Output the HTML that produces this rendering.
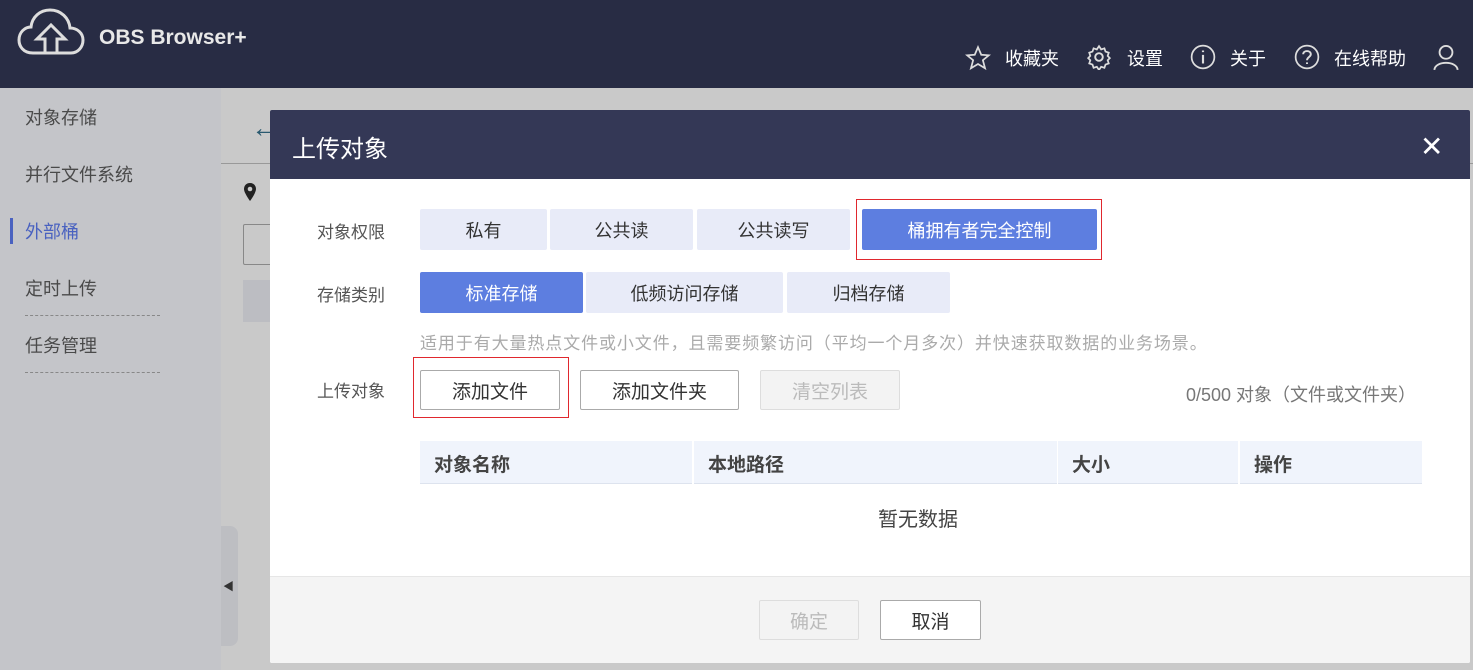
<!DOCTYPE html>
<html><head><meta charset="utf-8"><style>
*{box-sizing:border-box;margin:0;padding:0}
body{width:1473px;height:670px;overflow:hidden;position:relative;font-family:"Liberation Sans","Noto Sans CJK SC",sans-serif;background:#c5c6c9}
.abs{position:absolute}
.top{left:0;top:0;width:1473px;height:88px;background:#282c44;color:#fff}
.side{left:0;top:88px;width:221px;height:582px;background:#c4c5c9}
.side div{position:absolute;left:25px;font-size:18px;color:#4a4a4a}
.main{left:221px;top:88px;width:1252px;height:582px;background:#c9c9c9}
.dlg{left:270px;top:110px;width:1200px;height:553px;background:#fff;border-radius:2px;overflow:hidden}
.hd{left:0;top:0;width:1200px;height:69px;background:#343856;color:#fff;font-size:24px;padding:19px 22px}
.lbl{font-size:17px;color:#555}
.seg{position:absolute;height:41px;background:#e8ebf8;color:#333;font-size:18px;display:flex;align-items:center;justify-content:center;border-radius:2px}
.on{background:#5d7ee0;color:#fff}
.btn{position:absolute;height:40px;border:1px solid #aaa;border-radius:2px;font-size:19px;color:#333;display:flex;align-items:center;justify-content:center;background:#fff}
.red{position:absolute;border:1px solid #e0282e}
.th{position:absolute;top:331px;height:43px;background:#f0f4fc;border-bottom:1px solid #dde3ee;font-size:19px;font-weight:bold;color:#444;padding:9px 14px}
.nav{font-size:18px;color:#fff;top:45px}
</style></head><body>
<div class="abs top">
<svg class="abs" style="left:17px;top:6px" width="68" height="50" viewBox="0 0 68 50"><path d="M16 47 C6 47 2 40 2 34 C2 26 8 21 14 21 C15 11 23 4 33 4 C44 4 52 12 53 22 C60 22 66 27 66 34 C66 41 61 47 54 47 Z" fill="none" stroke="#ddd" stroke-width="3"/><path d="M28 48 V33 H20 L34 19 L48 33 H40 V48" fill="none" stroke="#ddd" stroke-width="3"/></svg>
<div class="abs" style="left:99px;top:26px;font-size:21px;font-weight:bold;color:#e8e8e8">OBS Browser+</div>
<svg class="abs" style="left:965px;top:45px" width="26" height="26" viewBox="0 0 24 24"><path d="M12 2 L15 9 L22 9.5 L16.5 14 L18.5 21.5 L12 17.5 L5.5 21.5 L7.5 14 L2 9.5 L9 9 Z" fill="none" stroke="#ddd" stroke-width="1.6"/></svg>
<div class="abs nav" style="left:1005px">收藏夹</div>
<svg class="abs" style="left:1086px;top:44px" width="26" height="26" viewBox="0 0 24 24"><circle cx="12" cy="12" r="3.5" fill="none" stroke="#ddd" stroke-width="1.8"/><path d="M12 2 l2 3 3-1 1 3 3 1 -1 3 2 2 -2 2 1 3 -3 1 -1 3 -3 -1 -2 3 -2 -3 -3 1 -1 -3 -3 -1 1 -3 -2 -2 2 -2 -1 -3 3 -1 1 -3 3 1z" fill="none" stroke="#ddd" stroke-width="1.6"/></svg>
<div class="abs nav" style="left:1127px">设置</div>
<svg class="abs" style="left:1190px;top:44px" width="26" height="26" viewBox="0 0 24 24"><circle cx="12" cy="12" r="10.5" fill="none" stroke="#ddd" stroke-width="1.6"/><path d="M12 10 V18 M12 6 V7.5" stroke="#ddd" stroke-width="2"/></svg>
<div class="abs nav" style="left:1230px">关于</div>
<svg class="abs" style="left:1294px;top:44px" width="26" height="26" viewBox="0 0 24 24"><circle cx="12" cy="12" r="10.5" fill="none" stroke="#ddd" stroke-width="1.6"/><path d="M8.5 9.5 C8.5 5.5 15.5 5.5 15.5 9.5 C15.5 12 12 12 12 15 M12 17 V18.5" fill="none" stroke="#ddd" stroke-width="1.8"/></svg>
<div class="abs nav" style="left:1334px">在线帮助</div>
<svg class="abs" style="left:1432px;top:43px" width="28" height="28" viewBox="0 0 24 24"><circle cx="12" cy="8" r="5.5" fill="none" stroke="#ddd" stroke-width="1.6"/><path d="M2 23 C3 15 21 15 22 23" fill="none" stroke="#ddd" stroke-width="1.6"/></svg>
</div>
<div class="abs side">
<div style="top:16px">对象存储</div>
<div style="top:73px">并行文件系统</div>
<div style="top:130px;color:#4a62c0">外部桶</div>
<span class="abs" style="left:10px;top:130px;width:3px;height:26px;background:#4a62c0"></span>
<div style="top:187px">定时上传</div>
<span class="abs" style="left:25px;top:227px;width:135px;border-top:1px dashed #888"></span>
<div style="top:244px">任务管理</div>
<span class="abs" style="left:25px;top:284px;width:135px;border-top:1px dashed #888"></span>
</div>
<div class="abs main">
<div class="abs" style="left:30px;top:24px;font-size:28px;font-weight:bold;color:#2a5a70">←</div>
<div class="abs" style="left:0;top:75px;width:1252px;border-top:1px solid #999"></div>
<svg class="abs" style="left:22px;top:94px" width="14" height="20" viewBox="0 0 14 20"><path d="M7 1 C3 1 1 4 1 7 C1 11 7 19 7 19 C7 19 13 11 13 7 C13 4 11 1 7 1Z" fill="#222"/><circle cx="7" cy="7" r="2.3" fill="#c9c9c9"/></svg>
<div class="abs" style="left:22px;top:136px;width:50px;height:41px;border:1px solid #888;border-radius:2px"></div>
<div class="abs" style="left:22px;top:192px;width:50px;height:42px;background:#bcbdc2"></div>
<div class="abs" style="left:0;top:438px;width:17px;height:120px;background:#bdbec2;border-radius:0 8px 8px 0"></div>
<div class="abs" style="left:2px;top:490px;font-size:11px;color:#333">◀</div>
</div>
<div class="abs dlg">
<div class="abs hd">上传对象</div>
<div class="abs" style="left:1150px;top:20px;font-size:28px;color:#fff">✕</div>
<div class="abs lbl" style="left:47px;top:108px">对象权限</div>
<div class="seg" style="left:150px;top:99px;width:127px">私有</div>
<div class="seg" style="left:280px;top:99px;width:143px">公共读</div>
<div class="seg" style="left:427px;top:99px;width:153px">公共读写</div>
<div class="seg on" style="left:592px;top:99px;width:235px">桶拥有者完全控制</div>
<div class="red" style="left:586px;top:89px;width:246px;height:61px"></div>
<div class="abs lbl" style="left:47px;top:171px">存储类别</div>
<div class="seg on" style="left:150px;top:162px;width:163px">标准存储</div>
<div class="seg" style="left:316px;top:162px;width:197px">低频访问存储</div>
<div class="seg" style="left:517px;top:162px;width:163px">归档存储</div>
<div class="abs" style="left:150px;top:219px;font-size:17px;letter-spacing:0.9px;color:#aaa;white-space:nowrap">适用于有大量热点文件或小文件，且需要频繁访问（平均一个月多次）并快速获取数据的业务场景。</div>
<div class="abs lbl" style="left:47px;top:267px">上传对象</div>
<div class="btn" style="left:150px;top:260px;width:140px">添加文件</div>
<div class="red" style="left:143px;top:247px;width:156px;height:61px"></div>
<div class="btn" style="left:310px;top:260px;width:159px">添加文件夹</div>
<div class="btn" style="left:490px;top:260px;width:140px;background:#f3f3f3;border-color:#ddd;color:#bbb">清空列表</div>
<div class="abs" style="left:916px;top:271px;font-size:18px;color:#777;white-space:nowrap">0/500 对象（文件或文件夹）</div>
<div class="th" style="left:150px;width:272px">对象名称</div>
<div class="th" style="left:424px;width:363px">本地路径</div>
<div class="th" style="left:788px;width:180px">大小</div>
<div class="th" style="left:970px;width:182px">操作</div>
<div class="abs" style="left:608px;top:393px;font-size:20px;color:#444">暂无数据</div>
<div class="abs" style="left:0;top:466px;width:1200px;height:87px;background:#f4f4f4;border-top:1px solid #e6e6e6"></div>
<div class="btn" style="left:489px;top:490px;width:100px;background:#f3f3f3;border-color:#ddd;color:#bbb">确定</div>
<div class="btn" style="left:610px;top:490px;width:101px">取消</div>
</div>
</body></html>
